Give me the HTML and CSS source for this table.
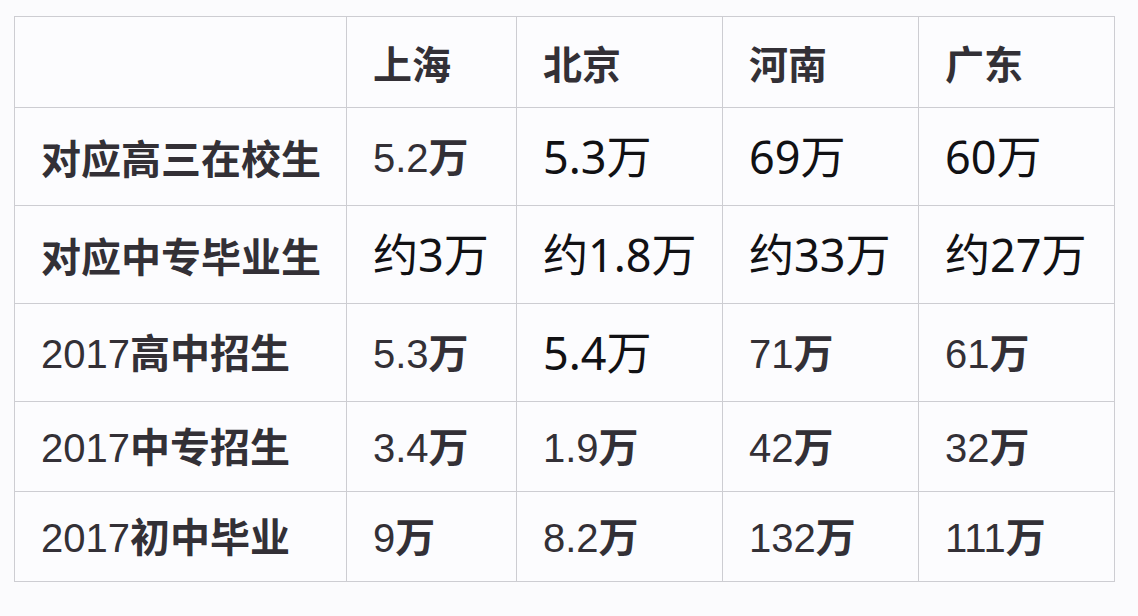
FILE: index.html
```html
<!DOCTYPE html>
<html lang="zh-CN">
<head>
<meta charset="utf-8">
<link rel="stylesheet" href="styles.css">
</head>
<body>
<table class="stats">
  <colgroup>
    <col class="c0"><col class="c1"><col class="c2"><col class="c3"><col class="c4">
  </colgroup>
  <tr class="r-head">
    <td></td>
    <td class="hd">上海</td>
    <td class="hd">北京</td>
    <td class="hd">河南</td>
    <td class="hd">广东</td>
  </tr>
  <tr class="r-tall">
    <td class="lbl">对应高三在校生</td>
    <td><span class="num">5.2</span><span class="cj">万</span></td>
    <td class="big">5.3万</td>
    <td class="big">69万</td>
    <td class="big">60万</td>
  </tr>
  <tr class="r-tall">
    <td class="lbl">对应中专毕业生</td>
    <td class="big">约3万</td>
    <td class="big">约1.8万</td>
    <td class="big">约33万</td>
    <td class="big">约27万</td>
  </tr>
  <tr class="r-tall">
    <td class="lbl"><span class="num">2017</span>高中招生</td>
    <td><span class="num">5.3</span><span class="cj">万</span></td>
    <td class="big">5.4万</td>
    <td><span class="num">71</span><span class="cj">万</span></td>
    <td><span class="num">61</span><span class="cj">万</span></td>
  </tr>
  <tr class="r-short">
    <td class="lbl"><span class="num">2017</span>中专招生</td>
    <td><span class="num">3.4</span><span class="cj">万</span></td>
    <td><span class="num">1.9</span><span class="cj">万</span></td>
    <td><span class="num">42</span><span class="cj">万</span></td>
    <td><span class="num">32</span><span class="cj">万</span></td>
  </tr>
  <tr class="r-short">
    <td class="lbl"><span class="num">2017</span>初中毕业</td>
    <td><span class="num">9</span><span class="cj">万</span></td>
    <td><span class="num">8.2</span><span class="cj">万</span></td>
    <td><span class="num">132</span><span class="cj">万</span></td>
    <td><span class="num">111</span><span class="cj">万</span></td>
  </tr>
</table>
</body>
</html>
```
FILE: styles.css
```css
html, body {
  background: #fbfbfd;
}
body {
  margin: 16px 0 0 14px;
  font-family: "Noto Sans CJK SC", sans-serif;
  color: #333036;
}
.stats {
  border-collapse: collapse;
  table-layout: fixed;
  width: 1101px;
  background: #fcfcfe;
}
.c0 { width: 332px; }
.c1 { width: 170px; }
.c2 { width: 206px; }
.c3 { width: 196px; }
.c4 { width: 196px; }
.stats td {
  border: 1px solid #cdcdd2;
  padding: 0 0 0 26px;
  vertical-align: middle;
  white-space: nowrap;
  font-size: 40px;
  line-height: 1;
}
.r-head td { height: 90px; }
.r-tall td { height: 97px; }
.r-short td { height: 89px; }
.stats .hd, .stats .lbl, .stats .cj {
  font-family: "Noto Sans CJK SC", sans-serif;
  font-weight: 700;
}
.stats .hd { font-size: 39px; }
.stats .lbl { font-size: 40px; }
.stats .num {
  font-family: "Liberation Sans", Arial, sans-serif;
  font-weight: 400;
  font-size: 40px;
}
.stats .big {
  font-family: "Noto Sans", "Noto Sans CJK SC", sans-serif;
  font-weight: 400;
  font-size: 45px;
  color: #111114;
}
```
